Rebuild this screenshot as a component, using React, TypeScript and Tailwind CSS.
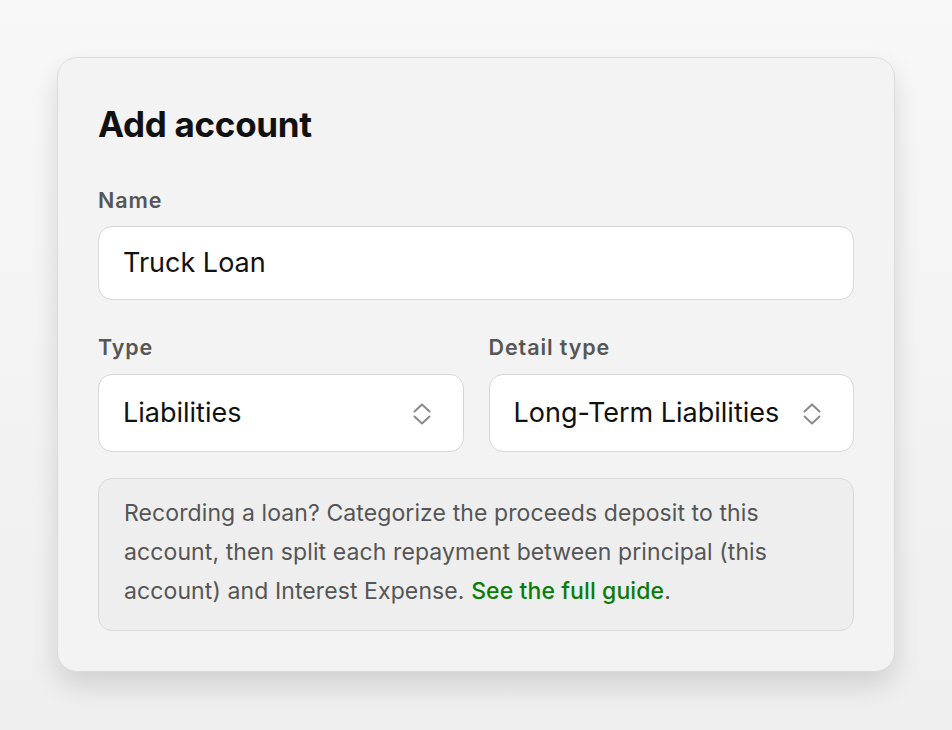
function Label({ children }: { children: React.ReactNode }) {
  return (
    <p className="text-[21.5px] leading-[28px] font-semibold text-[#565656] tracking-[0.9px]">
      {children}
    </p>
  );
}

function UpDown() {
  return (
    <svg
      width="18"
      height="24"
      viewBox="0 0 18 24"
      fill="none"
      stroke="#8a8a8a"
      strokeWidth="2"
      strokeLinecap="round"
      strokeLinejoin="round"
    >
      <path d="M1.5 10.5 9 3.5l7.5 7" />
      <path d="M1.5 15.5 9 22.5l7.5-7" />
    </svg>
  );
}

function SelectBox({ value }: { value: string }) {
  return (
    <div className="flex items-center justify-between h-[78px] pl-6 pr-[32px] bg-white border border-[#d6d6d6] rounded-[14px]">
      <span className="text-[27px] text-[#111]">{value}</span>
      <UpDown />
    </div>
  );
}

export default function App() {
  return (
    <div
      className="min-h-screen w-full bg-gradient-to-b from-[#f8f8f8] to-[#efefef] pt-[57px]"
      style={{ fontFamily: "Inter, 'Noto Sans', sans-serif" }}
    >
      {/* CARD */}
      <div className="mx-auto w-[838px] bg-[#f3f3f3] border border-[#dcdcdc] rounded-[20px] p-10 shadow-[0_14px_28px_rgba(0,0,0,0.13)]">
        <h2 className="text-[35px] leading-[53px] font-bold text-[#111] tracking-[-0.3px]">
          Add account
        </h2>

        {/* NAME */}
        <div className="mt-[35px] flex flex-col gap-[12px]">
          <Label>Name</Label>
          <div className="flex items-center h-[74px] px-6 bg-white border border-[#d6d6d6] rounded-[14px]">
            <span className="text-[27px] text-[#111]">Truck Loan</span>
          </div>
        </div>

        {/* TYPE + DETAIL TYPE */}
        <div className="mt-[33px] grid grid-cols-2 gap-[25px]">
          <div className="flex flex-col gap-[13px]">
            <Label>Type</Label>
            <SelectBox value="Liabilities" />
          </div>
          <div className="flex flex-col gap-[13px]">
            <Label>Detail type</Label>
            <SelectBox value="Long-Term Liabilities" />
          </div>
        </div>

        {/* INFO */}
        <div className="mt-[26px] bg-[#eeeeee] border border-[#d9d9d9] rounded-[14px] px-[25px] pt-[15px] pb-[19px]">
          <p className="text-[23px] leading-[39px] text-[#555] tracking-[0.1px]">
            Recording a loan? Categorize the proceeds deposit to this account,
            then split each repayment between principal (this account) and
            Interest Expense.{" "}
            <a href="#" className="text-[#0a7c0a] font-medium">
              See the full guide
            </a>
            .
          </p>
        </div>
      </div>
    </div>
  );
}
